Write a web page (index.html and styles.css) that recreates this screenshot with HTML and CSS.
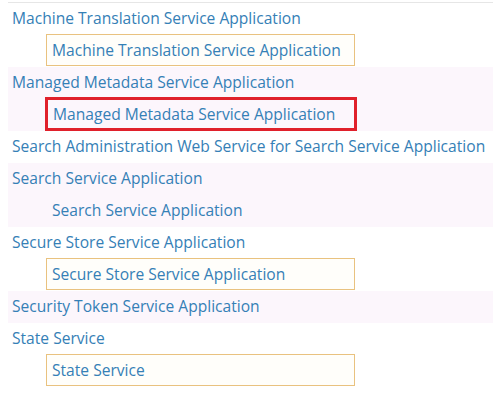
FILE: index.html
```html
<!DOCTYPE html>
<html lang="en">
<head>
    <meta charset="UTF-8">
    <title>Service Applications</title>
    <link rel="stylesheet" href="styles.css">
</head>
<body>
    <div class="list">
        <div class="group">
            <div class="name">Machine Translation Service Application</div>
            <div class="proxy boxed">Machine Translation Service Application</div>
        </div>
        <div class="group alt">
            <div class="name">Managed Metadata Service Application</div>
            <div class="proxy selected">Managed Metadata Service Application</div>
        </div>
        <div class="group single">
            <div class="name">Search Administration Web Service for Search Service Application</div>
        </div>
        <div class="group alt">
            <div class="name">Search Service Application</div>
            <div class="proxy">Search Service Application</div>
        </div>
        <div class="group">
            <div class="name">Secure Store Service Application</div>
            <div class="proxy boxed">Secure Store Service Application</div>
        </div>
        <div class="group alt single">
            <div class="name">Security Token Service Application</div>
        </div>
        <div class="group">
            <div class="name">State Service</div>
            <div class="proxy boxed">State Service</div>
        </div>
    </div>
</body>
</html>
```

FILE: styles.css
```css
body {
    margin: 2px 4px 0 8px;
    background-color: #ffffff;
    font-family: "Open Sans", sans-serif;
    font-size: 15.6px;
    color: #3580b6;
}
.list {
    border-top: 1px solid #e6e6e6;
}
.group {
    height: 64px;
}
.group.single {
    height: 32px;
}
.alt {
    background-color: #fcf6fc;
}
.name {
    height: 31px;
    line-height: 30px;
    padding-left: 4px;
    white-space: nowrap;
}
.proxy {
    box-sizing: border-box;
    height: 32px;
    width: 309px;
    margin-left: 38px;
    padding-left: 5px;
    line-height: 30px;
    border: 1px solid transparent;
    white-space: nowrap;
}
.boxed {
    border-color: #e9c27f;
    background-color: #fffefa;
}
.selected {
    height: 34px;
    width: 312px;
    margin-left: 37px;
    margin-top: -1px;
    padding-left: 5px;
    line-height: 28px;
    border: 3px solid #e0202b;
}
```
